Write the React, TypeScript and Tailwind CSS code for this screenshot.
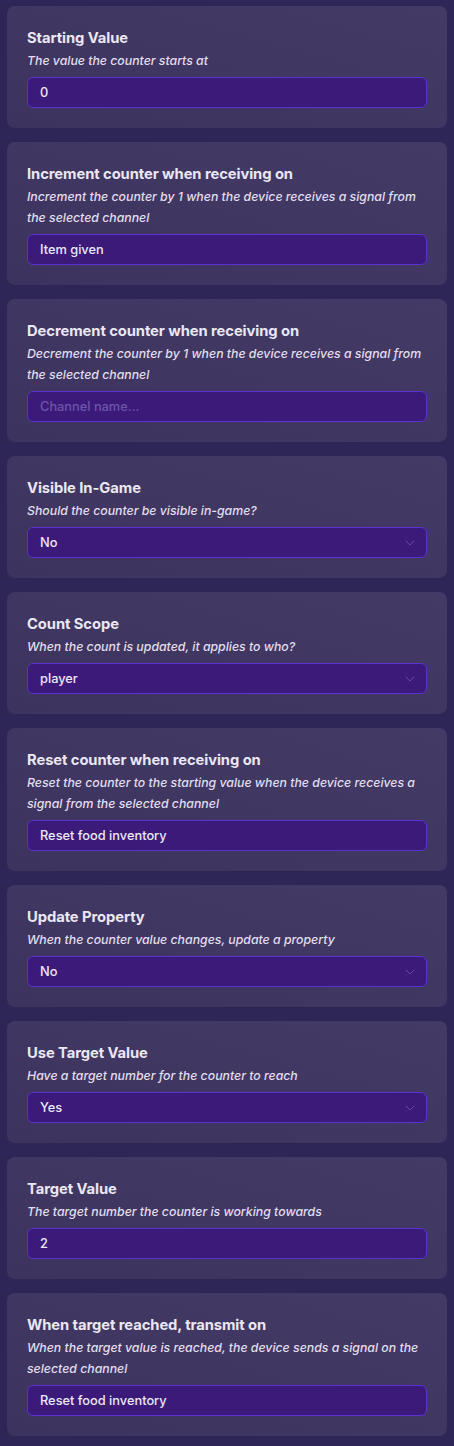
import { ChevronDown } from "lucide-react";

type Field = {
  title: string;
  desc: string;
  kind: "input" | "select";
  value?: string;
  placeholder?: string;
};

const fields: Field[] = [
  { title: "Starting Value", desc: "The value the counter starts at", kind: "input", value: "0" },
  {
    title: "Increment counter when receiving on",
    desc: "Increment the counter by 1 when the device receives a signal from the selected channel",
    kind: "input",
    value: "Item given",
  },
  {
    title: "Decrement counter when receiving on",
    desc: "Decrement the counter by 1 when the device receives a signal from the selected channel",
    kind: "input",
    placeholder: "Channel name...",
  },
  { title: "Visible In-Game", desc: "Should the counter be visible in-game?", kind: "select", value: "No" },
  { title: "Count Scope", desc: "When the count is updated, it applies to who?", kind: "select", value: "player" },
  {
    title: "Reset counter when receiving on",
    desc: "Reset the counter to the starting value when the device receives a signal from the selected channel",
    kind: "input",
    value: "Reset food inventory",
  },
  { title: "Update Property", desc: "When the counter value changes, update a property", kind: "select", value: "No" },
  { title: "Use Target Value", desc: "Have a target number for the counter to reach", kind: "select", value: "Yes" },
  { title: "Target Value", desc: "The target number the counter is working towards", kind: "input", value: "2" },
  {
    title: "When target reached, transmit on",
    desc: "When the target value is reached, the device sends a signal on the selected channel",
    kind: "input",
    value: "Reset food inventory",
  },
];

function FieldCard({ field }: { field: Field }) {
  return (
    <div className="rounded-lg bg-gradient-to-bl from-[#433a66] to-[#3c345e] p-5">
      <div className="text-[14.75px] leading-6 font-bold tracking-[-0.005em] text-[#ebe7f3]">
        {field.title}
      </div>
      <div className="text-[12.3px] leading-[21px] font-medium italic text-[#e2deee]">{field.desc}</div>
      <div className="mt-1.5 flex h-[31px] items-center justify-between rounded-md border border-[#5b32cf] bg-[#3b1a7a] pl-3 pr-2">
        {field.value ? (
          <span className="text-[12.8px] font-medium text-[#ece8f6]">{field.value}</span>
        ) : (
          <span className="text-[12.8px] font-medium text-[#6c55a8]">{field.placeholder}</span>
        )}
        {field.kind === "select" && (
          <ChevronDown className="h-4 w-4 text-[#6c55a8]" strokeWidth={1.25} />
        )}
      </div>
    </div>
  );
}

export default function App() {
  return (
    <div
      className="min-h-screen w-[454px] bg-[#2e2656] px-[7px] pt-1.5 pb-3"
      style={{ fontFamily: "Inter, 'Noto Sans', sans-serif" }}
    >
      <div className="flex flex-col gap-[14px]">
        {fields.map((f) => (
          <FieldCard key={f.title} field={f} />
        ))}
      </div>
    </div>
  );
}
